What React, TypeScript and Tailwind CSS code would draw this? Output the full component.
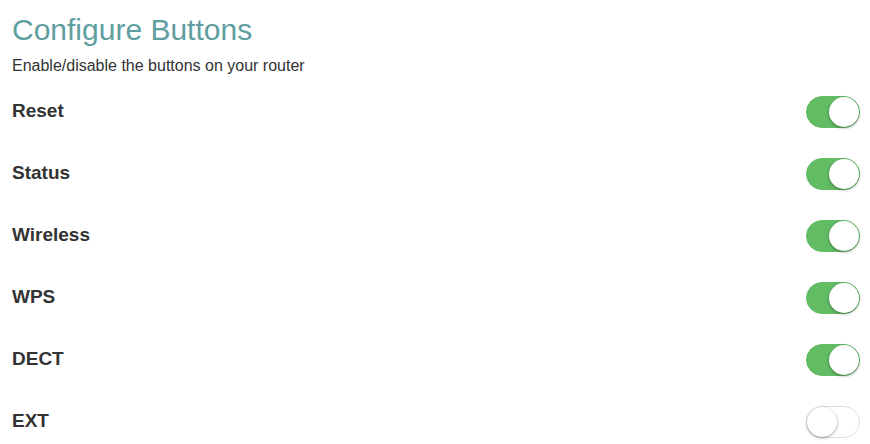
import React, { useState } from 'react';

const initial = [
  { name: 'Reset', on: true },
  { name: 'Status', on: true },
  { name: 'Wireless', on: true },
  { name: 'WPS', on: true },
  { name: 'DECT', on: true },
  { name: 'EXT', on: false },
];

const Toggle: React.FC<{ on: boolean; onClick: () => void }> = ({ on, onClick }) => (
  <button
    type="button"
    onClick={onClick}
    className={`relative h-[32px] w-[54px] rounded-full border transition ${
      on ? 'border-[#62bc63] bg-[#62bc63]' : 'border-[#dfdfdf] bg-white'
    }`}
  >
    <span
      className={`absolute top-[0px] h-[30px] w-[30px] rounded-full bg-white shadow-[0_1px_3px_rgba(0,0,0,0.4)] transition ${
        on ? 'left-[22px]' : 'left-[0px]'
      }`}
    />
  </button>
);

export default function App() {
  const [buttons, setButtons] = useState(initial);

  return (
    <div className="bg-white px-3 pr-[10px] font-['Liberation_Sans',Arial,sans-serif] text-[#333]">
      {/* Header */}
      <h1 className="pt-[12px] text-[30px] leading-[36px] text-[#5f9ea0]">Configure Buttons</h1>
      <p className="mt-[8px] text-[16px] leading-[20px]">Enable/disable the buttons on your router</p>

      {/* Button rows */}
      <div className="mt-[5px] flex flex-col">
        {buttons.map((b, i) => (
          <div key={b.name} className="flex h-[62px] items-center justify-between">
            <span className="pb-[2px] text-[19px] font-bold">{b.name}</span>
            <Toggle
              on={b.on}
              onClick={() => setButtons(buttons.map((x, j) => (j === i ? { ...x, on: !x.on } : x)))}
            />
          </div>
        ))}
      </div>
    </div>
  );
}
